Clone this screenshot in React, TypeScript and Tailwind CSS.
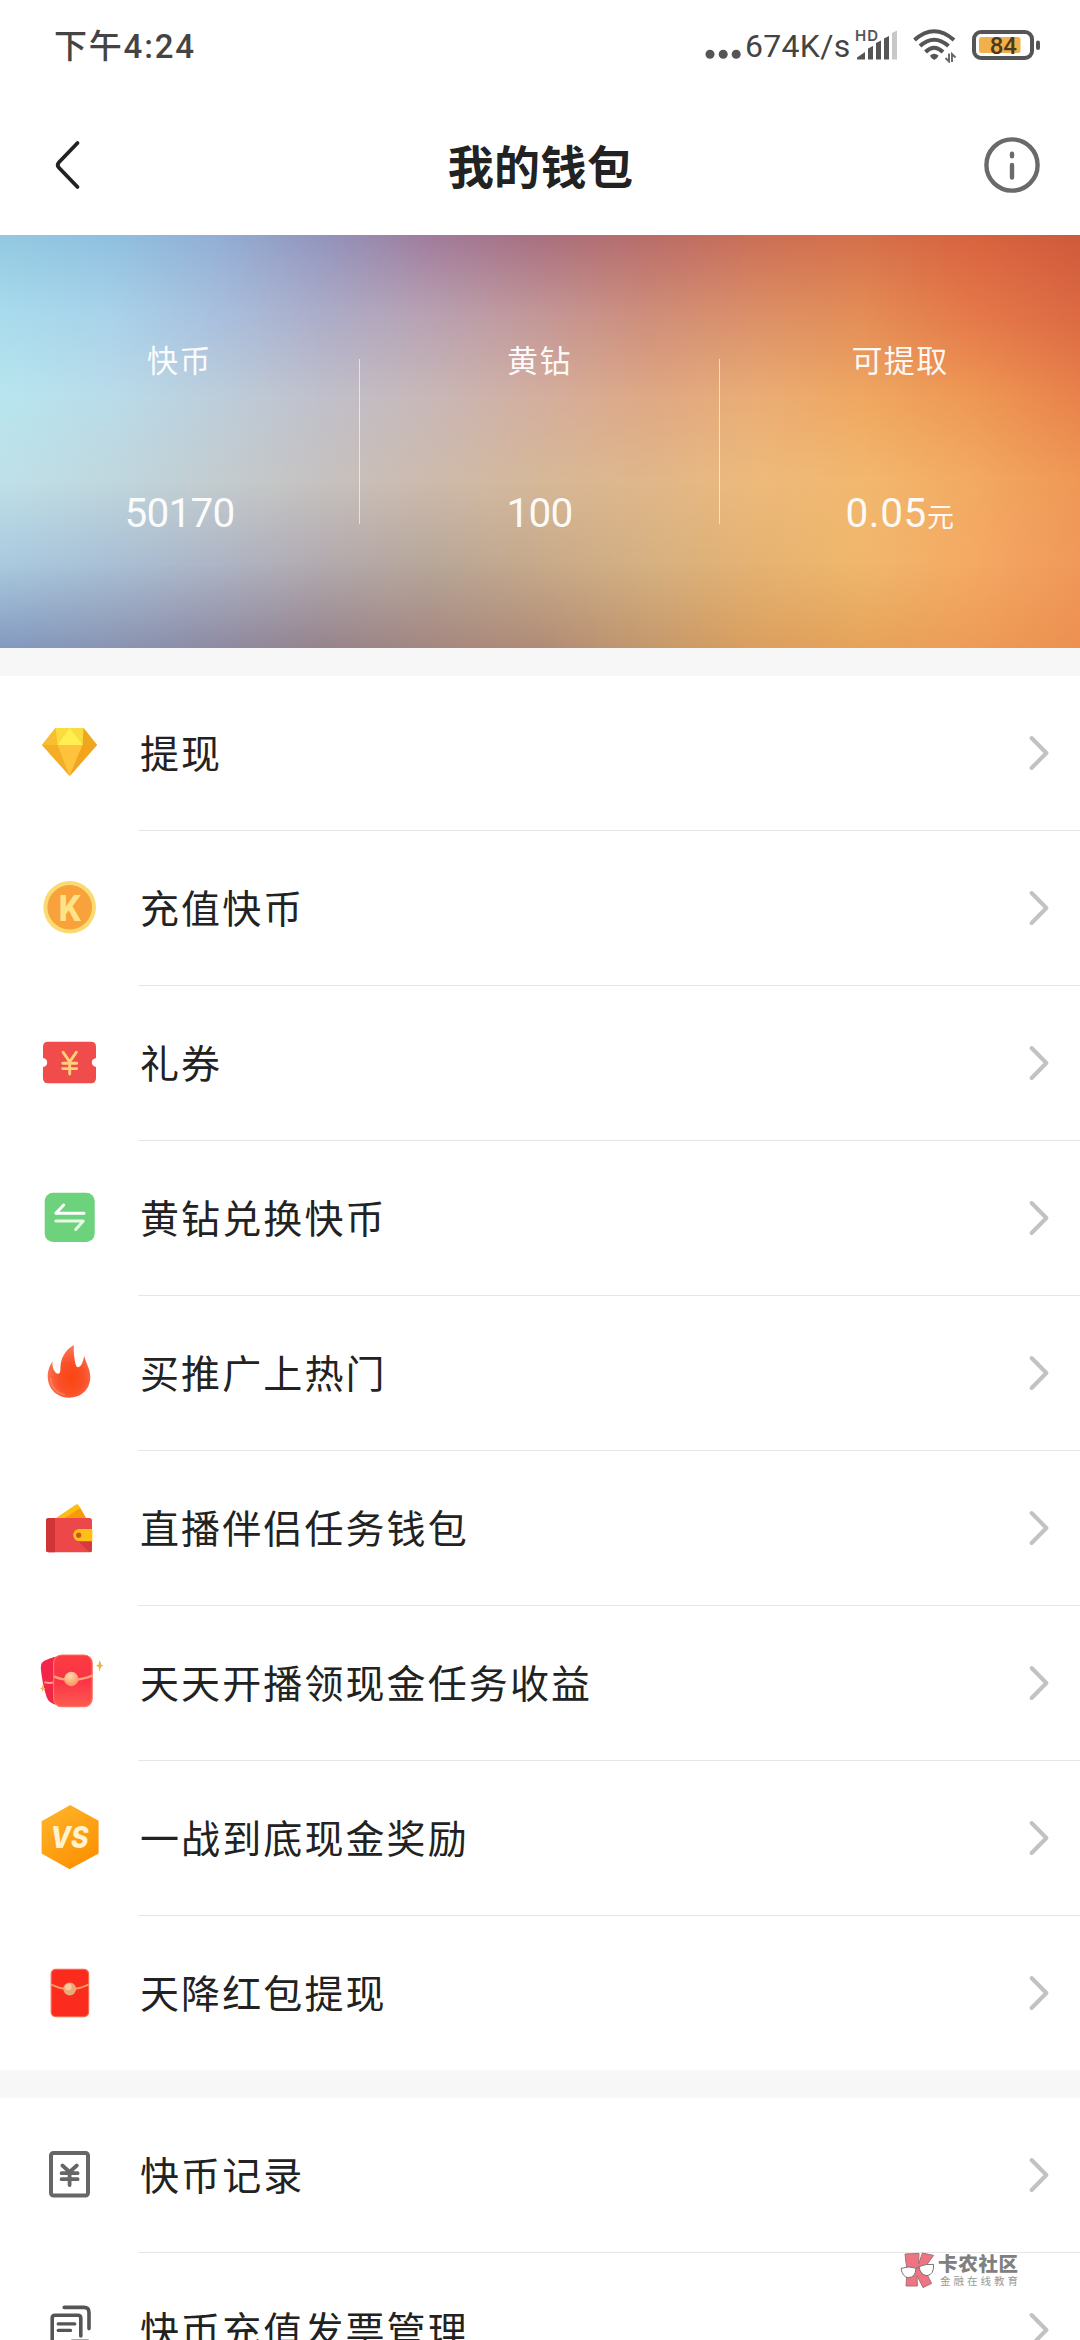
import type { ReactNode } from "react";

type Item = { label: string; icon: ReactNode };

// colour rows of the balance banner, from top to bottom
const bannerRows = [
  ["#93c9e2", "#8fc1e0", "#93afd5", "#9394bd", "#a17c9c", "#a97080", "#b96d6a", "#cc6f56", "#d5704b", "#d9633f", "#cf5a3c"],
  ["#a9dced", "#aad3ea", "#a9c0de", "#adadc8", "#b9a2b2", "#c49898", "#cf8f7b", "#dc9168", "#e48e57", "#e5794a", "#dc6a43"],
  ["#b8e6ee", "#badcea", "#bdcedb", "#c1c0ca", "#c9b8b7", "#d4af9e", "#dfa985", "#eaae76", "#f0a861", "#ee9955", "#e9834c"],
  ["#bfe0e8", "#bfd7de", "#c3cccf", "#c6c1bf", "#cdbaac", "#d6b898", "#e0b78a", "#edba7b", "#f2b86e", "#f3aa62", "#ef9856"],
  ["#a9c9df", "#a8bfd5", "#adb4c5", "#b2a9ae", "#b7a698", "#c7a98a", "#d5b081", "#e5b272", "#f0b76c", "#f5a963", "#f0985a"],
  ["#8399bf", "#8a94b3", "#8e8aa3", "#96848c", "#a58780", "#b08c76", "#c4986c", "#da9f5e", "#e5a35a", "#ed9c57", "#ec9050"],
];

const balances = [
  { label: "快币", value: "50170", unit: "" },
  { label: "黄钻", value: "100", unit: "" },
  { label: "可提取", value: "0.05", unit: "元" },
];

function Svg({ children }: { children: ReactNode }) {
  return (
    <svg viewBox="0 0 64 64" className="w-16 h-16 overflow-visible" fill="none">
      {children}
    </svg>
  );
}

const DiamondIcon = () => (
  <Svg>
    <path d="M17.5 7H45.5L59 24L31.7 55L4 24Z" fill="#f5b324" />
    <path d="M17.5 7L19.5 24H4Z" fill="#f7bf30" />
    <path d="M45.5 7L44.5 24H59Z" fill="#eda81f" />
    <path d="M17.5 7H45.5L44.5 24H19.5Z" fill="#fbdc3e" />
    <path d="M31.7 7L44.5 24H19.5Z" fill="#ffef52" />
    <path d="M4 24H19.5L31.7 55Z" fill="#f4ae25" />
    <path d="M19.5 24H44.5L31.7 55Z" fill="#ffc23c" />
    <path d="M44.5 24H59L31.7 55Z" fill="#f2a41f" />
  </Svg>
);

const CoinIcon = () => (
  <Svg>
    <circle cx="31.7" cy="31.3" r="26.3" fill="#fbda72" />
    <circle cx="31.7" cy="31.3" r="21.8" fill="#f9a23b" stroke="#f0a63c" />
    <text x="32.2" y="44.6" textAnchor="middle" fontFamily="Inter" fontWeight="800" fontSize="36" textLength="23" lengthAdjust="spacingAndGlyphs" fill="#ffe387">
      K
    </text>
  </Svg>
);

const CouponIcon = () => (
  <Svg>
    <path
      d="M10 10.7H53Q58 10.7 58 15.7V27Q53.8 28 53.8 31.4T58 36V47.3Q58 52.3 53 52.3H10Q5 52.3 5 47.3V36Q9.2 35 9.2 31.4T5 27V15.7Q5 10.7 10 10.7Z"
      fill="#f04c4b"
    />
    <path d="M25 21.2L31.7 30.8L38.4 21.2M31.7 30.8V43M24.7 32.2H38.7M24.7 37.6H38.7" stroke="#ffd07a" strokeWidth="2.9" strokeLinecap="round" />
  </Svg>
);

const ExchangeIcon = () => (
  <Svg>
    <rect x="6.7" y="6.7" width="50" height="49.4" rx="8.5" fill="#6cd27b" />
    <path d="M25.7 19L17.8 27.2H46" stroke="#fff" strokeWidth="3" strokeLinecap="round" strokeLinejoin="round" />
    <path d="M17.8 35H45.3L37.7 43.6" stroke="#e6fbe6" strokeWidth="3" strokeLinecap="round" strokeLinejoin="round" />
  </Svg>
);

const FireIcon = () => (
  <Svg>
    <defs>
      <radialGradient id="fire" cx="0.55" cy="0.62" r="0.6">
        <stop offset="0" stopColor="#fb4510" />
        <stop offset="0.5" stopColor="#fa5028" />
        <stop offset="1" stopColor="#fc7655" />
      </radialGradient>
    </defs>
    <path
      d="M14.6 20.5C13.6 26 17 33 20.3 32.8C23.6 32 21.6 26.5 23.2 20.5C25.4 12.6 30.4 6.6 36 4.3C35.7 8.6 35.6 11.5 36.4 16.5C37 21.5 38 26.6 40.4 26.2C44 25.4 45 19.4 46.4 14.8C46.8 20 52.4 27.6 52.3 36C52.2 48.6 43 56.7 31 56.7C18.4 56.7 9.9 47.6 9.7 35.6C9.6 29.4 12 23.8 14.6 20.5Z"
      fill="url(#fire)"
    />
    <path d="M12.6 38C13.4 47 19.6 52.4 26 53.4" stroke="#ff8a66" strokeOpacity=".6" strokeWidth="2" strokeLinecap="round" />
  </Svg>
);

const CashWalletIcon = () => (
  <Svg>
    <path d="M18 22L38 8.6Q39.7 7.6 40.8 9.4L48 22Z" fill="#fdbd14" />
    <path d="M26.5 22L42.2 12L48 22Z" fill="#f99a0a" />
    <rect x="8" y="22" width="46" height="34.2" rx="2.5" fill="#ec4849" />
    <path d="M17 22H10.5Q8 22 8 24.5V53.7Q8 56.2 10.5 56.2H17Z" fill="#cf3436" />
    <path d="M40 45H54V53.7Q54 56.2 51.5 56.2Z" fill="#d53a3c" />
    <path d="M54.4 33V45.2H41.3A6.1 6.1 0 0 1 41.3 33Z" fill="#fec016" />
    <circle cx="40.7" cy="39.2" r="2.6" fill="#d0521c" />
  </Svg>
);

const DoublePacketIcon = () => (
  <Svg>
    <defs>
      <linearGradient id="packetFront" x1="0" y1="0" x2="0" y2="1">
        <stop offset="0" stopColor="#fb3c40" />
        <stop offset="0.5" stopColor="#fb3347" />
        <stop offset="1" stopColor="#fd5c50" />
      </linearGradient>
      <radialGradient id="pearl" cx="0.4" cy="0.3" r="0.8">
        <stop offset="0" stopColor="#ffd9b0" />
        <stop offset="1" stopColor="#f98a4e" />
      </radialGradient>
    </defs>
    <path d="M2.8 17Q2.4 11.5 7 9.6Q15 5.4 25 4.4L28 53.5H17Q10.5 51.5 8.6 46Q4 32 2.8 17Z" fill="#f3264a" />
    <path d="M6.4 31.2Q11 32.4 16 31.6" stroke="#fda27c" strokeWidth="2" />
    <rect x="15.6" y="4" width="38.6" height="51.6" rx="8" fill="url(#packetFront)" stroke="#fd7460" strokeWidth="1.2" />
    <path d="M16 25.4Q33 33 54.4 24.6" stroke="#ffa37b" strokeWidth="2.4" />
    <circle cx="33.3" cy="28" r="7.2" fill="url(#pearl)" />
    <path d="M61.7 9L63.2 13.4L65.2 14.6L63 16L61.4 20.4L60.4 15.8L58 14.8L60.4 13.4Z" fill="#e8b64a" />
    <path d="M4.7 33.6L5.6 36.6L7.6 37.4L5.6 38.4L4.5 41L3.8 38.2L2 37.4L3.9 36.4Z" fill="#f0b45a" />
  </Svg>
);

const VersusIcon = () => (
  <Svg>
    <defs>
      <linearGradient id="hex" x1="0" y1="0" x2="0.6" y2="1">
        <stop offset="0" stopColor="#ffb62c" />
        <stop offset="1" stopColor="#fd9204" />
      </linearGradient>
    </defs>
    <path d="M32.2 0L59.8 15.3V47L31.6 62.4L4.4 47V15.6Z" fill="url(#hex)" stroke="url(#hex)" strokeWidth="1.6" strokeLinejoin="round" />
    <text x="12.5" y="42.4" fontFamily="Inter" fontStyle="italic" fontWeight="800" fontSize="30" textLength="38" lengthAdjust="spacingAndGlyphs" fill="#fff3cf">
      VS
    </text>
  </Svg>
);

const PacketIcon = () => (
  <Svg>
    <rect x="13.2" y="8.4" width="37.4" height="47.2" rx="4.5" fill="#fb2c1e" stroke="#f9694d" strokeWidth="1.2" />
    <path d="M13 23.4Q31.7 33 51 23.4" stroke="#f7996a" strokeWidth="1.9" />
    <circle cx="31.7" cy="28" r="6.4" fill="#eda878" />
    <circle cx="30.4" cy="26" r="3.2" fill="#f7cba2" />
  </Svg>
);

const RecordIcon = () => (
  <Svg>
    <g stroke="#666" strokeLinecap="round" strokeLinejoin="round">
      <rect x="13" y="10" width="37" height="42.6" rx="2.5" strokeWidth="4" />
      <path d="M24.4 22.5L31.6 29L38.8 22.5M31.6 29V42M23.6 30.2H39.6M23.6 36.2H39.6" strokeWidth="3.8" />
    </g>
  </Svg>
);

const InvoiceIcon = () => (
  <Svg>
    <g stroke="#555" strokeLinecap="round" strokeLinejoin="round" strokeWidth="3.6">
      <path d="M26.2 9.4H46Q51 9.4 51 14.4V30.6" />
      <path d="M42.8 38V20Q42.8 17.2 40 17.2H17Q14.2 17.2 14.2 20V54" />
      <path d="M20.2 25.9H36.8M20.2 32.4H32.6M34 43H50" strokeWidth="3.2" />
    </g>
  </Svg>
);

const walletItems: Item[] = [
  { label: "提现", icon: <DiamondIcon /> },
  { label: "充值快币", icon: <CoinIcon /> },
  { label: "礼券", icon: <CouponIcon /> },
  { label: "黄钻兑换快币", icon: <ExchangeIcon /> },
  { label: "买推广上热门", icon: <FireIcon /> },
  { label: "直播伴侣任务钱包", icon: <CashWalletIcon /> },
  { label: "天天开播领现金任务收益", icon: <DoublePacketIcon /> },
  { label: "一战到底现金奖励", icon: <VersusIcon /> },
  { label: "天降红包提现", icon: <PacketIcon /> },
];

const recordItems: Item[] = [
  { label: "快币记录", icon: <RecordIcon /> },
  { label: "快币充值发票管理", icon: <InvoiceIcon /> },
];

function StatusBar() {
  return (
    <div className="h-[90px] pl-[54px] pr-[38px] flex items-center justify-between text-[#444]">
      <span className="pt-[2px] text-[33px] font-medium leading-none tracking-[1.8px]">下午4:24</span>
      <div className="flex items-center">
        <svg width="36" height="30" className="mr-[4px]" fill="#555">
          <circle cx="5" cy="24.3" r="4.5" />
          <circle cx="18.2" cy="24.3" r="4.5" />
          <circle cx="31.2" cy="24.3" r="4.5" />
        </svg>
        <span className="w-[108px] pt-[2px] text-[32px] leading-[38px] tracking-[0.3px] whitespace-nowrap">674K/s</span>
        <svg width="48" height="34" viewBox="0 0 48 34" className="mr-[12px] overflow-visible" fill="#555">
          <text x="2" y="13" fontFamily="Inter" fontWeight="600" fontSize="15" textLength="23">
            HD
          </text>
          <path d="M4 31.5V29.5L12 24V31.5Z" />
          <path d="M15 31.5V20.5L20 18V31.5Z" />
          <path d="M23 31.5V15L28 12.5V31.5Z" />
          <path d="M31 31.5V10.5L36 8V31.5Z" />
          <path d="M39 31.5V5L44 2.5V31.5Z" fill="#c8c8c8" />
        </svg>
        <svg width="44" height="36" viewBox="0 0 44 36" className="mr-[15px]" fill="none" stroke="#555" strokeWidth="4">
          <path d="M1.5 13Q21 -4.5 41 13" />
          <path d="M7 19Q21 6.5 35.5 19" />
          <path d="M12.5 25Q21 16.5 30 25" />
          <path d="M17 28.5Q21 25 25.5 28.5Q25 31 21.2 33Q17.5 31 17 28.5Z" fill="#555" stroke="none" />
          <path d="M36 26.5V34.5L32.5 31M39 35V27L42.5 30.5" strokeWidth="1.9" stroke="#666" />
        </svg>
        <svg width="70" height="34" viewBox="0 0 70 34">
          <rect x="2" y="4" width="58" height="26" rx="7" fill="none" stroke="#555" strokeWidth="4" />
          <rect x="7" y="9" width="41.5" height="16" rx="2.5" fill="#f2b04d" />
          <rect x="64" y="12.5" width="4" height="9.5" rx="2" fill="#555" />
          <text x="31.3" y="25.6" textAnchor="middle" fontFamily="Roboto" fontWeight="500" fontSize="24" fill="#4a3a1e">
            84
          </text>
        </svg>
      </div>
    </div>
  );
}

function TitleBar() {
  return (
    <header className="h-[145px] pl-[52px] pr-[38px] grid grid-cols-[60px_1fr_60px] items-center">
      <svg width="32" height="56" viewBox="0 0 32 56" fill="none" className="mb-[-4px]">
        <path d="M25.5 6L7 25.2Q4.4 28 7 30.8L25.5 50" stroke="#222" strokeWidth="3.8" strokeLinecap="round" />
      </svg>
      <h1 className="text-center text-[46px] leading-none font-bold text-[#222] tracking-[0.4px] pt-[10px] pr-[13px]">我的钱包</h1>
      <svg width="60" height="60" viewBox="0 0 60 60" fill="none" stroke="#6a6a6a" strokeLinecap="round">
        <circle cx="30" cy="32" r="25.6" strokeWidth="4.4" />
        <path d="M30 20.8V23.2M30 32V44.6" strokeWidth="4.4" />
      </svg>
    </header>
  );
}

function BannerArt() {
  const last = bannerRows.length - 1;
  return (
    <svg viewBox="0 0 1080 413" preserveAspectRatio="none" className="absolute inset-0 w-full h-full">
      <defs>
        {bannerRows.map((row, i) => (
          <linearGradient key={i} id={`row${i}`}>
            {row.map((color, j) => (
              <stop key={j} offset={j / (row.length - 1)} stopColor={color} />
            ))}
          </linearGradient>
        ))}
        {bannerRows.slice(1).map((_, i) => (
          <linearGradient key={i} id={`fade${i + 1}`} x1="0" y1="0" x2="0" y2="1">
            <stop offset={i / last} stopColor="#fff" stopOpacity="0" />
            <stop offset={(i + 1) / last} stopColor="#fff" />
          </linearGradient>
        ))}
        {bannerRows.slice(1).map((_, i) => (
          <mask key={i} id={`mask${i + 1}`}>
            <rect width="1080" height="413" fill={`url(#fade${i + 1})`} />
          </mask>
        ))}
      </defs>
      {bannerRows.map((_, i) => (
        <rect key={i} width="1080" height="413" fill={`url(#row${i})`} mask={i ? `url(#mask${i})` : undefined} />
      ))}
    </svg>
  );
}

function Balance() {
  return (
    <section className="relative h-[413px]">
      <BannerArt />
      <div className="relative h-full grid grid-cols-3 text-white/95">
        {balances.map((b, i) => (
          <div key={b.label} className="flex items-center">
            <div className="flex-1 flex flex-col items-center pb-[4px]">
              <span className="text-[31px] leading-[40px] tracking-[1.4px]">{b.label}</span>
              <span className={`mt-[106px] h-[50px] flex items-baseline text-[40.5px] leading-[50px] ${b.unit ? "tracking-[0.6px]" : "tracking-[-0.8px]"}`}>
                {b.value}
                {b.unit && <span className="text-[27px]">{b.unit}</span>}
              </span>
            </div>
            {i < 2 && <div className="w-px h-[165px] bg-white/60" />}
          </div>
        ))}
      </div>
    </section>
  );
}

function Row({ item, last }: { item: Item; last: boolean }) {
  return (
    <li className="flex shrink-0 pl-[38px]">
      <div className="w-[100px] h-[154px] flex items-center">{item.icon}</div>
      <div className={`flex-1 flex items-center justify-between pr-[29px] ${last ? "h-[154px]" : "h-[155px] border-b border-[#e6e6e6]"}`}>
        <span className="pl-[2px] pt-[5px] text-[39px] leading-none tracking-[2.1px] text-[#222]">{item.label}</span>
        <svg width="24" height="40" viewBox="0 0 24 40" fill="none">
          <path d="M4.6 5L19.4 20L4.6 35" stroke="#c2c2c2" strokeWidth="4" strokeLinecap="round" strokeLinejoin="round" />
        </svg>
      </div>
    </li>
  );
}

function List({ items }: { items: Item[] }) {
  return (
    <ul className="flex flex-col bg-white">
      {items.map((item, i) => (
        <Row key={item.label} item={item} last={i === items.length - 1} />
      ))}
    </ul>
  );
}

function Watermark() {
  return (
    <div className="absolute left-[899px] top-[2251px] flex gap-[3px]">
      <svg width="36" height="38" viewBox="0 0 36 38" stroke="#777" strokeWidth="1">
        <path d="M6 3L20 2.4L19.6 13L23.4 2L34.6 4.4L25 17.6L32.6 32.4L24 36.6L18 24.6L18.4 35H7L8 20Z" fill="#ee7482" stroke="#a8707a" />
        <path d="M2 17.4Q10 14.6 17 17.2Q16.6 26.6 9.4 26.6Q3.6 26.4 2 17.4Z" fill="#fff" />
        <path d="M20 15.6Q27 12.6 34.6 13.4Q35 24 28 24.6Q21.4 24.4 20 15.6Z" fill="#fff" />
        <path d="M17 17.4L20 16" />
      </svg>
      <div className="flex flex-col pt-[4px]">
        <span className="text-[19.5px] leading-[20px] font-black text-[#808080] tracking-[0.7px]">卡农社区</span>
        <span className="pl-[2px] pt-px text-[10.5px] leading-[12px] text-[#999] tracking-[3px]">金融在线教育</span>
      </div>
    </div>
  );
}

export default function App() {
  return (
    <div className="relative w-[1080px] h-[2340px] overflow-hidden bg-[#f7f7f7] font-[Roboto,'Noto_Sans_CJK_SC',sans-serif]">
      <div className="bg-white">
        <StatusBar />
        <TitleBar />
      </div>
      <Balance />
      <main className="flex flex-col gap-7 pt-7">
        <List items={walletItems} />
        <List items={recordItems} />
      </main>
      <Watermark />
    </div>
  );
}
